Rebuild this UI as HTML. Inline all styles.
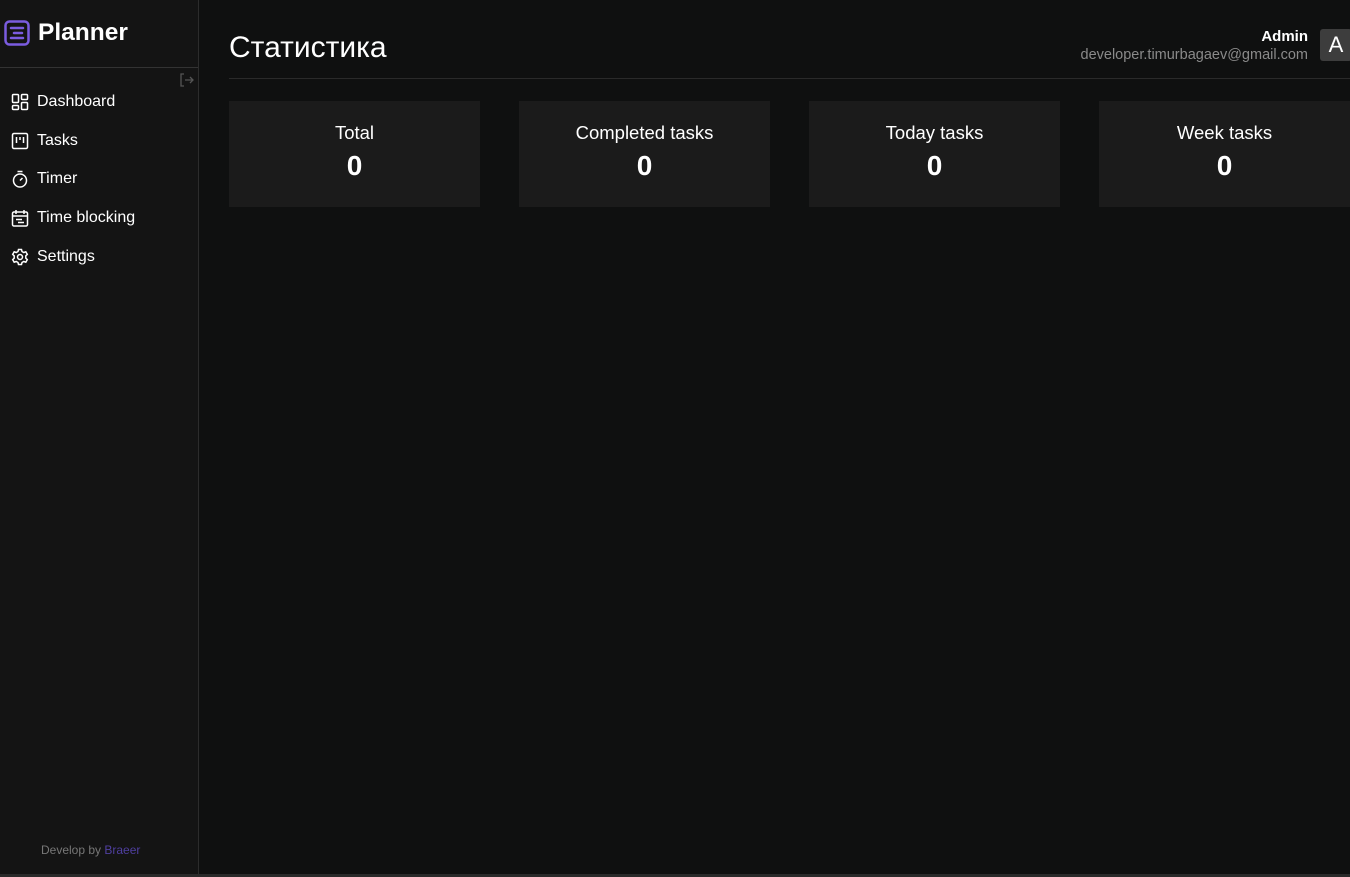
<!DOCTYPE html>
<html><head><meta charset="utf-8"><style>
*{box-sizing:border-box;margin:0;padding:0}
body{width:1350px;height:877px;background:#0f1010;font-family:"Liberation Sans","DejaVu Sans",sans-serif;color:#fff;position:relative;overflow:hidden}
.side{position:absolute;left:0;top:0;width:199px;height:875px;background:#141414;border-right:1px solid #2c2c2c}
.logo{position:absolute;left:4px;top:19px;display:flex;align-items:center;gap:8px}
.logo span{font-size:24.5px;font-weight:bold}
.sep{position:absolute;left:0;top:67px;width:198px;height:1px;background:#333}
.nav{position:absolute;left:11px;top:83px}
.item{display:flex;align-items:center;height:38.6px;font-size:16px;gap:8px}
.item svg{width:18px;height:18px}
.foot{position:absolute;left:41px;top:843px;font-size:12px;color:#777}
.foot b{font-weight:normal;color:#4f3fa0}
h1{position:absolute;left:229px;top:31px;font-size:30px;font-weight:normal}
.hl{position:absolute;left:229px;top:78px;width:1121px;height:1px;background:#2a2a2a}
.user{position:absolute;right:42px;top:28px;text-align:right}
.user .n{font-weight:bold;font-size:15px}
.user .e{font-size:14.5px;color:#8a8a8a;margin-top:2px}
.av{position:absolute;left:1320px;top:29px;width:32px;height:32px;background:#3d3d3d;border-radius:3px;font-size:22px;text-align:center;line-height:32px}
.card{position:absolute;top:101px;width:251px;height:106px;background:#1b1b1b;text-align:center}
.card .t{font-size:18.5px;margin-top:21px}
.card .v{font-size:28px;font-weight:bold;margin-top:6px}
.bot{position:absolute;left:0;top:874px;width:1350px;height:3px;background:#2a2a2a}
</style></head><body>
<div class="side">
<div class="logo"><svg width="26" height="26" viewBox="0 0 26 26"><rect x="1.5" y="1.5" width="23" height="23" rx="4" fill="none" stroke="#7b5ce0" stroke-width="2.5"/><path d="M7 8h12M10 13h8M7 18h12" stroke="#7b5ce0" stroke-width="2.5" stroke-linecap="round"/></svg><span>Planner</span></div>
<div class="sep"></div>
<svg style="position:absolute;left:179px;top:73px" width="15" height="14" viewBox="0 0 15 14" fill="none" stroke="#555" stroke-width="1.3"><path d="M5 1H2v12h3M6 7h8M11 4l3 3-3 3"/></svg>
<div class="nav">
<div class="item"><svg viewBox="0 0 18 18" fill="none" stroke="#fff" stroke-width="1.5"><rect x="1.5" y="1.5" width="6" height="8" rx="1"/><rect x="10.5" y="1.5" width="6" height="5" rx="1"/><rect x="1.5" y="12.5" width="6" height="4" rx="1"/><rect x="10.5" y="9.5" width="6" height="7" rx="1"/></svg>Dashboard</div>
<div class="item"><svg viewBox="0 0 18 18" fill="none" stroke="#fff" stroke-width="1.5"><rect x="1.5" y="1.5" width="15" height="15" rx="1.5"/><path d="M5.5 5v6M9 5v3M12.5 5v6"/></svg>Tasks</div>
<div class="item"><svg viewBox="0 0 18 18" fill="none" stroke="#fff" stroke-width="1.5"><circle cx="9" cy="10.5" r="6.5"/><path d="M6.5 1.5h5M9 10.5l2.5-2.5"/></svg>Timer</div>
<div class="item"><svg viewBox="0 0 18 18" fill="none" stroke="#fff" stroke-width="1.5"><rect x="1.5" y="3" width="15" height="14" rx="1.5"/><path d="M5 1v4M13 1v4M1.5 7h15M5 10.5h6M7 13.5h6"/></svg>Time blocking</div>
<div class="item"><svg viewBox="0 0 18 18" fill="none" stroke="#fff" stroke-width="1.5"><circle cx="9" cy="9" r="2.5"/><path d="M7.5 1.5h3l.5 2 1.8 1 2-.7 1.5 2.6-1.5 1.4v2.4l1.5 1.4-1.5 2.6-2-.7-1.8 1-.5 2h-3l-.5-2-1.8-1-2 .7-1.5-2.6 1.5-1.4V7.8L1.7 6.4l1.5-2.6 2 .7 1.8-1z"/></svg>Settings</div>
</div>
<div class="foot">Develop by <b>Braeer</b></div>
</div>
<h1>Статистика</h1>
<div class="user"><div class="n">Admin</div><div class="e">developer.timurbagaev@gmail.com</div></div>
<div class="av">A</div>
<div class="hl"></div>
<div class="card" style="left:229px"><div class="t">Total</div><div class="v">0</div></div>
<div class="card" style="left:519px"><div class="t">Completed tasks</div><div class="v">0</div></div>
<div class="card" style="left:809px"><div class="t">Today tasks</div><div class="v">0</div></div>
<div class="card" style="left:1099px"><div class="t">Week tasks</div><div class="v">0</div></div>
<div class="bot"></div>
</body></html>
